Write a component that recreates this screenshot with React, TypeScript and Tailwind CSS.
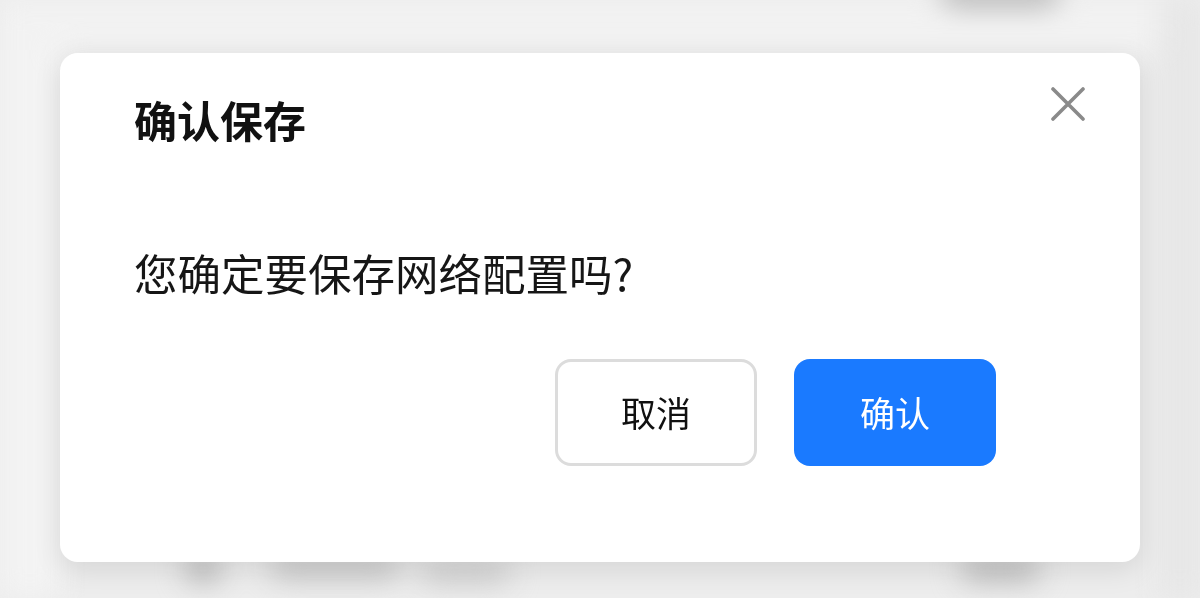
import React from 'react';

const CloseIcon: React.FC = () => (
  <svg width="34" height="34" viewBox="0 0 34 34" fill="none">
    <path d="M2 2L32 32M32 2L2 32" stroke="#8a8a8a" strokeWidth="3.6" strokeLinecap="round" />
  </svg>
);

const App: React.FC = () => {
  return (
    <div
      className="relative h-[598px] w-full overflow-hidden bg-[#ededed]"
      style={{ fontFamily: '"Noto Sans CJK SC", "Noto Sans", sans-serif' }}
    >
      {/* blurred page behind the dialog */}
      <div className="absolute inset-0 blur-[14px]">
        <div className="absolute left-0 top-0 h-full w-[60px] bg-[#f3f3f3]" />
        <div className="absolute left-0 top-0 h-[50px] w-full bg-[#f2f2f2]" />
        <div className="absolute right-0 top-0 h-full w-[40px] bg-[#e6e6e6]" />
        <div className="absolute left-[940px] top-[-22px] h-[30px] w-[120px] rounded-full bg-[#b8b8b8]" />
        <div className="absolute left-[185px] top-[556px] h-[26px] w-[36px] rounded-full bg-[#b5b5b5]" />
        <div className="absolute left-[270px] top-[556px] h-[22px] w-[130px] rounded-full bg-[#c2c2c2]" />
        <div className="absolute left-[420px] top-[560px] h-[24px] w-[90px] rounded-full bg-[#cdcdcd]" />
        <div className="absolute left-[960px] top-[556px] h-[26px] w-[80px] rounded-full bg-[#bdbdbd]" />
      </div>

      <div className="relative px-[60px] pt-[53px]">
        <div className="flex h-[509px] w-[1080px] flex-col rounded-[18px] bg-white pl-[74px] shadow-[0_8px_28px_rgba(0,0,0,0.10)]">
          <div className="flex items-start justify-between pr-[55px] pt-[42px]">
            <h2 className="text-[43px] font-bold leading-[48px] text-[#111111]">确认保存</h2>
            <button className="-mt-[8px] flex h-[34px] w-[34px] items-center justify-center">
              <CloseIcon />
            </button>
          </div>

          <p className="mt-[106px] text-[43.5px] leading-[48px] text-[#161616]">您确定要保存网络配置吗?</p>

          <div className="mt-[62px] flex justify-end gap-[37px] pr-[144px]">
            <button className="flex h-[107px] w-[202px] items-center justify-center rounded-[16px] border-[3px] border-[#dcdcdc] bg-white text-[35px] text-[#111111]">
              取消
            </button>
            <button className="flex h-[107px] w-[202px] items-center justify-center rounded-[16px] bg-[#1a7aff] text-[35px] text-white">
              确认
            </button>
          </div>
        </div>
      </div>
    </div>
  );
};

export default App;
